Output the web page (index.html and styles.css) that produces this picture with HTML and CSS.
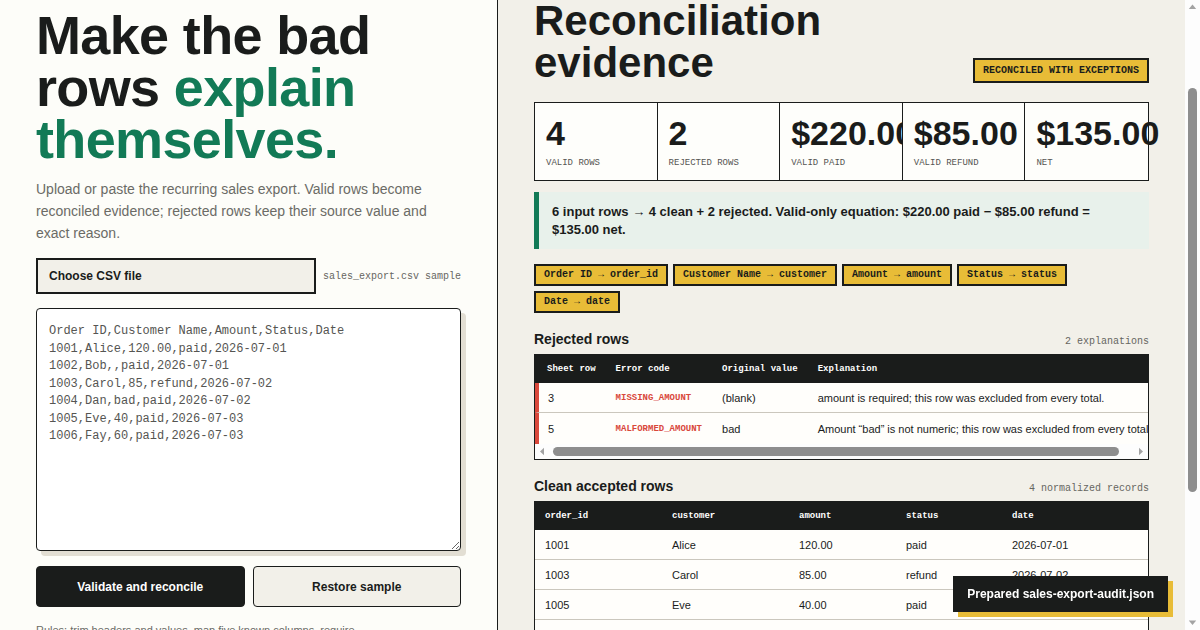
FILE: index.html
```html
<!DOCTYPE html>
<html lang="en">
<head>
<meta charset="utf-8">
<title>Sales export reconciliation</title>
<link rel="stylesheet" href="styles.css">
</head>
<body>
<main class="app">
  <section class="input-panel">
    <h1 class="hero">Make the bad rows <span class="accent">explain themselves.</span></h1>
    <p class="lede">Upload or paste the recurring sales export. Valid rows become reconciled evidence; rejected rows keep their source value and exact reason.</p>
    <div class="file-row">
      <label class="file-btn">Choose CSV file<input type="file" accept=".csv" class="file-input"></label>
      <span class="file-name">sales_export.csv sample</span>
    </div>
    <textarea class="csv-input" spellcheck="false">Order ID,Customer Name,Amount,Status,Date
1001,Alice,120.00,paid,2026-07-01
1002,Bob,,paid,2026-07-01
1003,Carol,85,refund,2026-07-02
1004,Dan,bad,paid,2026-07-02
1005,Eve,40,paid,2026-07-03
1006,Fay,60,paid,2026-07-03</textarea>
    <div class="actions">
      <button class="btn btn-primary" type="button">Validate and reconcile</button>
      <button class="btn btn-secondary" type="button">Restore sample</button>
    </div>
    <p class="rules">Rules: trim headers and values, map five known columns, require an order ID and a numeric amount, and normalize status to paid or refund.</p>
  </section>

  <section class="evidence-panel">
    <div class="title-row">
      <h2 class="evidence-title">Reconciliation<br>evidence</h2>
      <span class="badge">RECONCILED WITH EXCEPTIONS</span>
    </div>

    <div class="metrics">
      <div class="metric"><div class="metric-value">4</div><div class="metric-label">VALID ROWS</div></div>
      <div class="metric"><div class="metric-value">2</div><div class="metric-label">REJECTED ROWS</div></div>
      <div class="metric"><div class="metric-value">$220.00</div><div class="metric-label">VALID PAID</div></div>
      <div class="metric"><div class="metric-value">$85.00</div><div class="metric-label">VALID REFUND</div></div>
      <div class="metric"><div class="metric-value">$135.00</div><div class="metric-label">NET</div></div>
    </div>

    <p class="callout">6 input rows → 4 clean + 2 rejected. Valid-only equation: $220.00 paid − $85.00 refund = $135.00 net.</p>

    <div class="chips">
      <span class="chip">Order ID → order_id</span>
      <span class="chip">Customer Name → customer</span>
      <span class="chip">Amount → amount</span>
      <span class="chip">Status → status</span>
      <span class="chip">Date → date</span>
    </div>

    <div class="section-head">
      <h3 class="section-title">Rejected rows</h3>
      <span class="section-meta">2 explanations</span>
    </div>
    <div class="table-wrap">
      <div class="table-clip">
        <table class="data-table rejected">
          <thead>
            <tr><th>Sheet row</th><th>Error code</th><th>Original value</th><th>Explanation</th></tr>
          </thead>
          <tbody>
            <tr><td>3</td><td class="err">MISSING_AMOUNT</td><td>(blank)</td><td>amount is required; this row was excluded from every total.</td></tr>
            <tr><td>5</td><td class="err">MALFORMED_AMOUNT</td><td>bad</td><td>Amount “bad” is not numeric; this row was excluded from every total.</td></tr>
          </tbody>
        </table>
      </div>
      <div class="hscroll" aria-hidden="true">
        <svg class="sb-btn" width="15" height="15" viewBox="0 0 15 15"><path d="M5 7.5 L9 3.8 L9 11.2 Z" fill="#a3a3a3"/></svg>
        <div class="hscroll-track"><div class="hscroll-thumb"></div></div>
        <svg class="sb-btn" width="15" height="15" viewBox="0 0 15 15"><path d="M10 7.5 L6 3.8 L6 11.2 Z" fill="#a3a3a3"/></svg>
      </div>
    </div>

    <div class="section-head">
      <h3 class="section-title">Clean accepted rows</h3>
      <span class="section-meta">4 normalized records</span>
    </div>
    <div class="table-wrap">
      <table class="data-table clean">
        <thead>
          <tr><th>order_id</th><th>customer</th><th>amount</th><th>status</th><th>date</th></tr>
        </thead>
        <tbody>
          <tr><td>1001</td><td>Alice</td><td>120.00</td><td>paid</td><td>2026-07-01</td></tr>
          <tr><td>1003</td><td>Carol</td><td>85.00</td><td>refund</td><td>2026-07-02</td></tr>
          <tr><td>1005</td><td>Eve</td><td>40.00</td><td>paid</td><td>2026-07-03</td></tr>
          <tr><td>1006</td><td>Fay</td><td>60.00</td><td>paid</td><td>2026-07-03</td></tr>
        </tbody>
      </table>
    </div>
  </section>
</main>

<div class="toast" role="status">Prepared sales-export-audit.json</div>

<div class="page-scrollbar" aria-hidden="true">
  <svg class="sb-btn" width="15" height="15" viewBox="0 0 15 15"><path d="M7.5 4.5 L11.2 9 L3.8 9 Z" fill="#a3a3a3"/></svg>
  <div class="vscroll-track"><div class="vscroll-thumb"></div></div>
  <svg class="sb-btn" width="15" height="15" viewBox="0 0 15 15"><path d="M7.5 10 L11.2 5.5 L3.8 5.5 Z" fill="#a3a3a3"/></svg>
</div>

<script src="script.js"></script>
</body>
</html>
```

FILE: styles.css
```css
* { box-sizing: border-box; }

html, body { margin: 0; padding: 0; }

body {
  font-family: "Liberation Sans", Arial, sans-serif;
  color: #1a1c1b;
  background: #f2f0e9;
  padding-right: 15px;
}

.app {
  display: grid;
  grid-template-columns: 498px 1fr;
  min-height: 100vh;
}

/* ---------- left: input ---------- */
.input-panel {
  background: #fdfdf9;
  border-right: 1px solid #1a1c1b;
  padding: 124px 36px 36px;
}

.hero {
  margin: 0;
  font-size: 54px;
  line-height: 0.96;
  font-weight: 700;
  letter-spacing: -0.012em;
  color: #1a1c1b;
}

.accent { color: #127a56; }

.lede {
  margin: 13px 0 0;
  max-width: 410px;
  font-size: 14px;
  line-height: 22px;
  color: #6b6b66;
}

.file-row {
  margin-top: 14px;
  display: flex;
  align-items: center;
  gap: 7px;
}

.file-btn {
  flex: 1;
  height: 36px;
  display: flex;
  align-items: center;
  padding: 0 11px;
  background: #f2f0e9;
  border: 2px solid #1a1c1b;
  font-size: 12px;
  font-weight: 700;
  color: #1a1c1b;
  cursor: pointer;
}

.file-input { display: none; }

.file-name {
  font-family: "Liberation Mono", "Courier New", monospace;
  font-size: 10px;
  color: #666661;
  white-space: nowrap;
}

.csv-input {
  display: block;
  width: 100%;
  height: 243px;
  margin-top: 14px;
  padding: 14px 12px 12px;
  border: 1.5px solid #1a1c1b;
  border-radius: 4px;
  background: #ffffff;
  box-shadow: 5px 5px 0 #e2ded3;
  font-family: "Liberation Mono", "Courier New", monospace;
  font-size: 12px;
  line-height: 17.5px;
  color: #555552;
  resize: vertical;
  outline: none;
}

.actions {
  margin-top: 15px;
  display: grid;
  grid-template-columns: 1fr 1fr;
  gap: 8px;
}

.btn {
  height: 41px;
  border-radius: 4px;
  font-family: "Liberation Sans", Arial, sans-serif;
  font-size: 12px;
  font-weight: 700;
  cursor: pointer;
}

.btn-primary {
  background: #1a1c1b;
  color: #ffffff;
  border: 1.5px solid #1a1c1b;
}

.btn-secondary {
  background: #f2f0e9;
  color: #1a1c1b;
  border: 1.5px solid #1a1c1b;
}

.rules {
  margin: 15px 0 0;
  max-width: 326px;
  font-size: 11px;
  line-height: 17px;
  color: #6b6b66;
}

/* ---------- right: evidence ---------- */
.evidence-panel {
  padding: 114px 36px 170px;
  min-width: 0;
}

.title-row {
  display: flex;
  justify-content: space-between;
  align-items: flex-end;
}

.evidence-title {
  margin: 0;
  font-size: 42px;
  line-height: 42px;
  font-weight: 700;
  color: #1a1c1b;
}

.badge {
  margin-bottom: 1px;
  padding: 0 8px;
  line-height: 21px;
  background: #e8bc37;
  border: 2px solid #1a1c1b;
  font-family: "Liberation Mono", "Courier New", monospace;
  font-size: 10px;
  font-weight: 700;
  color: #1a1c1b;
  white-space: nowrap;
}

.metrics {
  margin-top: 18px;
  display: grid;
  grid-template-columns: repeat(5, minmax(0, 1fr));
  border: 1px solid #1a1c1b;
}

.metric {
  background: #fefefb;
  padding: 13px 11px 11px;
  border-right: 1px solid #1a1c1b;
  white-space: nowrap;
}

.metric:last-child { border-right: 0; }

.metric-value {
  font-size: 34px;
  line-height: 34px;
  font-weight: 700;
  color: #1a1c1b;
}

.metric-label {
  margin-top: 7px;
  font-family: "Liberation Mono", "Courier New", monospace;
  font-size: 9px;
  line-height: 12px;
  color: #555552;
}

.callout {
  margin: 11px 0 0;
  padding: 11px 14px 10px 13px;
  background: #e8f1eb;
  border-left: 5px solid #127a56;
  font-size: 13px;
  line-height: 18px;
  font-weight: 700;
  color: #1a1c1b;
}

.chips {
  margin-top: 15px;
  display: flex;
  flex-wrap: wrap;
  gap: 5px;
}

.chip {
  padding: 0 8px;
  line-height: 18px;
  background: #e8bc37;
  border: 2px solid #1a1c1b;
  font-family: "Liberation Mono", "Courier New", monospace;
  font-size: 10px;
  font-weight: 700;
  color: #1a1c1b;
  white-space: nowrap;
}

.section-head {
  margin: 18px 0 7px;
  display: flex;
  justify-content: space-between;
  align-items: baseline;
}

.section-title {
  margin: 0;
  font-size: 14px;
  line-height: 16px;
  font-weight: 700;
  color: #1a1c1b;
}

.section-meta {
  font-family: "Liberation Mono", "Courier New", monospace;
  font-size: 10px;
  color: #666661;
}

.table-wrap {
  border: 1px solid #1a1c1b;
  background: #fffefb;
  overflow: hidden;
}

.table-clip { overflow: hidden; }

.data-table {
  border-collapse: separate;
  border-spacing: 0;
  min-width: 100%;
}

.data-table.clean { width: 100%; }

.data-table th {
  height: 28px;
  padding: 0 10px;
  background: #1a1c1b;
  color: #ffffff;
  text-align: left;
  font-family: "Liberation Mono", "Courier New", monospace;
  font-size: 9px;
  font-weight: 700;
  white-space: nowrap;
}

.data-table td {
  height: 30px;
  padding: 0 10px;
  border-bottom: 1px solid #cbc7bd;
  font-size: 11px;
  color: #1a1c1b;
  white-space: nowrap;
}

.clean th:nth-child(1),
.clean th:nth-child(2) { width: 127px; }
.clean th:nth-child(3) { width: 107px; }
.clean th:nth-child(4) { width: 106px; }

.rejected th:first-child { border-left: 4px solid #1a1c1b; padding-left: 8px; }
.rejected td:first-child { border-left: 4px solid #d9483b; padding-left: 9px; }
.rejected tbody tr:last-child td { border-bottom: 0; height: 31px; }

.data-table td.err {
  font-family: "Liberation Mono", "Courier New", monospace;
  font-size: 9px;
  font-weight: 700;
  color: #d9483b;
}

/* scrollbar chrome (drawn) */
.sb-btn { display: block; flex: none; }

.hscroll {
  display: flex;
  align-items: center;
  height: 15px;
  background: #fdfdfd;
}

.hscroll-track { flex: 1; }

.hscroll-thumb {
  width: 97%;
  height: 9px;
  margin-left: 3px;
  border-radius: 5px;
  background: #8e8e8e;
}

.page-scrollbar {
  position: fixed;
  top: 0;
  right: 0;
  width: 15px;
  height: 100vh;
  display: flex;
  flex-direction: column;
  background: #fdfdfd;
}

.vscroll-track { flex: 1; }

.vscroll-thumb {
  width: 9px;
  height: 404px;
  margin: 73px 0 0 3px;
  border-radius: 5px;
  background: #8e8e8e;
}

.toast {
  position: fixed;
  right: 32px;
  bottom: 18px;
  padding: 11px 14px;
  line-height: 14px;
  background: #1a1c1b;
  color: #ffffff;
  font-size: 12px;
  font-weight: 700;
  box-shadow: 5px 5px 0 #e8bc37;
}
```

FILE: script.js
```js
(function () {
  function toEvidence() { window.scrollTo(0, 114); }
  if ('scrollRestoration' in history) { history.scrollRestoration = 'manual'; }
  toEvidence();
  window.addEventListener('load', toEvidence);
})();
```
